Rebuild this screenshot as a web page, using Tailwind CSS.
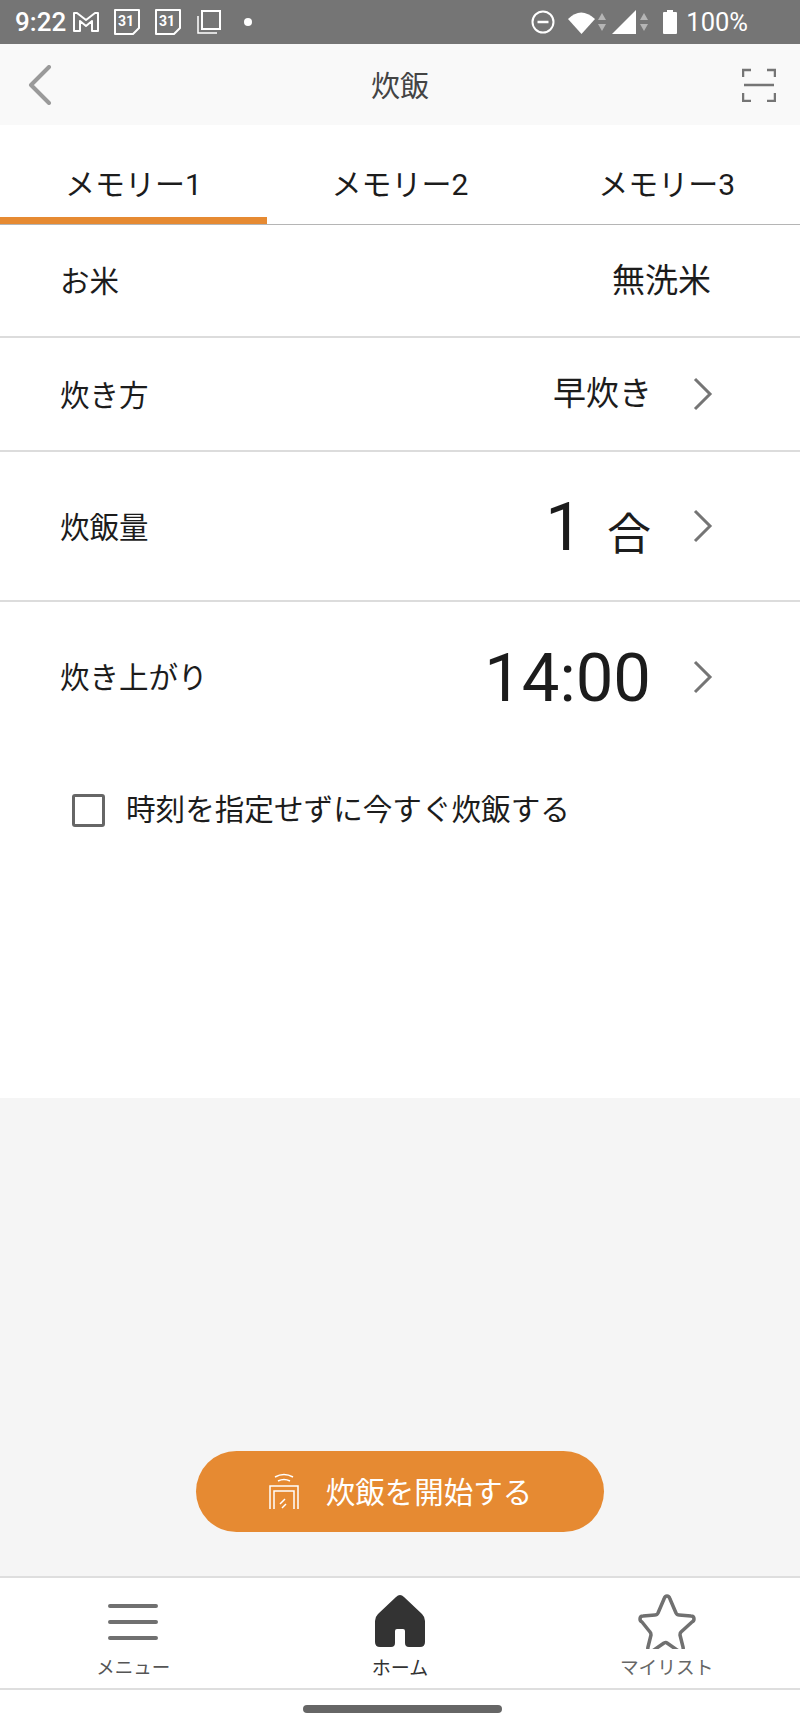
<!DOCTYPE html>
<html lang="ja">
<head>
    <meta charset="UTF-8">
    <meta name="viewport" content="width=device-width, initial-scale=1.0">
    <title>炊飯</title>
    <script src="https://cdn.jsdelivr.net/npm/@tailwindcss/browser@4"></script>
</head>
<body class="bg-white">
    <div class="w-[800px] h-[1733px] flex flex-col overflow-hidden text-[#1c1c1c] font-['Roboto','Noto_Sans_CJK_JP',sans-serif]">

        <!-- status bar -->
        <div class="h-11 shrink-0 bg-[#757575] flex items-center justify-between pl-[15px] pr-[52px] text-white">
            <div class="flex items-center">
                <span class="text-[26px] font-medium w-[57px]">9:22</span>
                <svg class="w-[28px] h-[24px]" viewBox="0 0 28 24" fill="none" stroke="white" stroke-width="2" stroke-linejoin="round"><path d="M2 3h3l9 7 9-7h3v18h-6V11l-6 5-6-5v10H2z"/></svg>
                <svg class="w-[28px] h-[28px] ml-[13px]" viewBox="0 0 28 28" fill="none" stroke="white" stroke-width="2" stroke-linejoin="round"><path d="M2 2h24v18l-6 6H2z"/><text x="13" y="18" fill="white" stroke="none" font-size="14" font-weight="700" text-anchor="middle">31</text></svg>
                <svg class="w-[28px] h-[28px] ml-[13px]" viewBox="0 0 28 28" fill="none" stroke="white" stroke-width="2" stroke-linejoin="round"><path d="M2 2h24v18l-6 6H2z"/><text x="13" y="18" fill="white" stroke="none" font-size="14" font-weight="700" text-anchor="middle">31</text></svg>
                <svg class="w-[26px] h-[26px] ml-[14px]" viewBox="0 0 26 26" fill="none" stroke="white" stroke-width="2"><rect x="6" y="2" width="18" height="18"/><path d="M2 7v17h19" stroke-width="1.500"/></svg>
                <span class="w-2 h-2 rounded-full bg-white ml-[22px]"></span>
            </div>
            <div class="flex items-center">
                <svg class="w-6 h-6" viewBox="0 0 24 24" fill="none" stroke="white" stroke-width="2"><circle cx="12" cy="12" r="10.500"/><path d="M6.500 12h11" stroke-width="2.500"/></svg>
                <svg class="w-[27px] h-[23px] ml-[13px]" viewBox="0 0 27 23" fill="white"><path d="M0 8Q13-5 27 8L13.500 23z"/></svg>
                <svg class="w-2 h-[20px] ml-[3px]" viewBox="0 0 8 20" fill="#b5b5b5"><path d="M4 1l4 7H0zM4 19L0 12h8z"/></svg>
                <svg class="w-[24px] h-[24px] ml-[6px]" viewBox="0 0 24 24" fill="white"><path d="M24 0v24H0z"/></svg>
                <svg class="w-2 h-[20px] ml-[4px]" viewBox="0 0 8 20" fill="#b5b5b5"><path d="M4 1l4 7H0zM4 19L0 12h8z"/></svg>
                <svg class="w-[14px] h-[24px] ml-[15px]" viewBox="0 0 14 24" fill="white"><path d="M4 0h6v2h3a1 1 0 0 1 1 1v20a1 1 0 0 1-1 1H1a1 1 0 0 1-1-1V3a1 1 0 0 1 1-1h3z"/></svg>
                <span class="text-[25.500px] ml-[9px]">100%</span>
            </div>
        </div>

        <!-- header -->
        <div class="h-[81px] shrink-0 bg-[#f9f9f9] grid grid-cols-[1fr_auto_1fr] items-center px-7">
            <svg class="w-[24px] h-[40px]" viewBox="0 0 24 40" fill="none" stroke="#9a9a9a" stroke-width="4" stroke-linecap="round" stroke-linejoin="round"><path d="M21 2L3 20l18 18"/></svg>
            <span class="text-[29px] leading-none text-[#444444] pt-[6px]">炊飯</span>
            <svg class="w-[34px] h-[34px] justify-self-end -mr-1" viewBox="0 0 34 34" fill="none" stroke="#757575" stroke-width="2.500"><path d="M1 9V2h8M25 2h8v7M1 25v8h8M25 33h8v-8M2 17h30"/></svg>
        </div>

        <!-- tabs -->
        <div class="h-[100px] shrink-0 grid grid-cols-3 border-b border-[#b5b5b5]">
            <div class="flex items-center justify-center border-b-[7px] border-[#e68a32] text-[30px] pt-[27px]">メモリー1</div>
            <div class="flex items-center justify-center text-[30px] pt-[27px] pb-[7px]">メモリー2</div>
            <div class="flex items-center justify-center text-[30px] pt-[27px] pb-[7px]">メモリー3</div>
        </div>

        <!-- settings -->
        <div class="h-[873px] shrink-0 flex flex-col">
            <div class="h-[113px] shrink-0 flex items-center justify-between border-b-2 border-[#dcdcdc] pl-[60px] pr-[89px]">
                <span class="text-[29.500px] pt-[4px]">お米</span>
                <span class="text-[33px]">無洗米</span>
            </div>
            <div class="h-[114px] shrink-0 flex items-center justify-between border-b-2 border-[#dcdcdc] pl-[60px] pr-[89px]">
                <span class="text-[29.500px] pt-[4px]">炊き方</span>
                <span class="flex items-center gap-[41px]">
                    <span class="text-[33px]">早炊き</span>
                    <svg class="w-5 h-[34px] -mr-[2px]" viewBox="0 0 20 34" fill="none" stroke="#757575" stroke-width="3"><path d="M2 2l15 15L2 32"/></svg>
                </span>
            </div>
            <div class="h-[150px] shrink-0 flex items-center justify-between border-b-2 border-[#dcdcdc] pl-[60px] pr-[89px]">
                <span class="text-[29.500px] pt-[4px]">炊飯量</span>
                <span class="flex items-center gap-[42px]">
                    <span class="flex items-baseline gap-[24px] pt-[2px]"><span class="text-[67px] leading-none">1</span><span class="text-[44px] leading-none">合</span></span>
                    <svg class="w-5 h-[34px] -mr-[2px]" viewBox="0 0 20 34" fill="none" stroke="#757575" stroke-width="3"><path d="M2 2l15 15L2 32"/></svg>
                </span>
            </div>
            <div class="h-[149px] shrink-0 flex items-center justify-between pl-[60px] pr-[89px]">
                <span class="text-[29.500px] pt-[4px]">炊き上がり</span>
                <span class="flex items-center gap-[42px]">
                    <span class="text-[67px] leading-none pt-[4px]">14:00</span>
                    <svg class="w-5 h-[34px] -mr-[2px]" viewBox="0 0 20 34" fill="none" stroke="#757575" stroke-width="3"><path d="M2 2l15 15L2 32"/></svg>
                </span>
            </div>
            <div class="flex items-center pl-[72px] mt-[37px]">
                <span class="w-[33px] h-[33px] border-[3px] border-[#666666] rounded-[3px]"></span>
                <span class="text-[29.600px] ml-[21px]">時刻を指定せずに今すぐ炊飯する</span>
            </div>
        </div>

        <!-- start button -->
        <div class="h-[478px] shrink-0 bg-[#f5f5f5] flex items-end justify-center pb-[44px]">
            <div class="w-[408px] h-[81px] rounded-full bg-[#e68a32] flex items-center justify-center text-white">
                <svg class="w-[32px] h-[40px]" viewBox="0 0 32 40" fill="none" stroke="white" stroke-width="1.500"><path d="M7 5q9-5 18 0M10 9q6-3 12 0M2 37V14h28v23M6 37V19h20v18M17 27l-5 5M18 32l-4 4"/></svg>
                <span class="text-[29.500px] ml-[26px] pt-[4px]">炊飯を開始する</span>
            </div>
        </div>

        <!-- bottom nav -->
        <div class="h-[114px] shrink-0 grid grid-cols-3 border-y-2 border-[#dedede]">
            <div class="flex flex-col items-center pt-[25px]">
                <svg class="w-[50px] h-[38px]" viewBox="0 0 50 38" fill="none" stroke="#707070" stroke-width="4" stroke-linecap="round"><path d="M2 3h46M2 19h46M2 35h46"/></svg>
                <span class="text-[18.500px] leading-none mt-[18px] text-[#555555]">メニュー</span>
            </div>
            <div class="flex flex-col items-center pt-[17px]">
                <svg class="w-[50px] h-[52px]" viewBox="0 0 50 52" fill="#333333"><path d="M25 0q2 0 4 2L47 19q3 3 3 7v21q0 5-5 5H34q-4 0-4-4V36q0-2-2-2h-6q-2 0-2 2v12q0 4-4 4H5q-5 0-5-5V26q0-4 3-7L21 2q2-2 4-2z"/></svg>
                <span class="text-[19px] leading-none mt-[12px] text-[#333333]">ホーム</span>
            </div>
            <div class="flex flex-col items-center pt-[15px]">
                <svg class="w-[58px] h-[56px]" viewBox="0 0 58 56" fill="none" stroke="#707070" stroke-width="3.500" stroke-linejoin="round"><path d="M29 3q2 0 3 3l6 14q1 2 3 2l12 1q3 0 3 3 0 2-2 3l-11 10q-1 1-1 3l3 12q1 4-3 4-1 0-3-1l-10-7q-1-1-3 0l-10 7q-2 1-3 1-4 0-3-4l3-12q0-2-1-3L4 29q-2-1-2-3 0-3 3-3l12-1q2 0 3-2l6-14q1-3 3-3z"/></svg>
                <span class="text-[18.700px] leading-none mt-[10px] text-[#666666]">マイリスト</span>
            </div>
        </div>

        <!-- gesture bar -->
        <div class="flex-1 flex items-start justify-center pt-[15px]">
            <div class="w-[199px] h-2 rounded-full bg-[#666666] ml-[4px]"></div>
        </div>
    </div>
</body>
</html>
